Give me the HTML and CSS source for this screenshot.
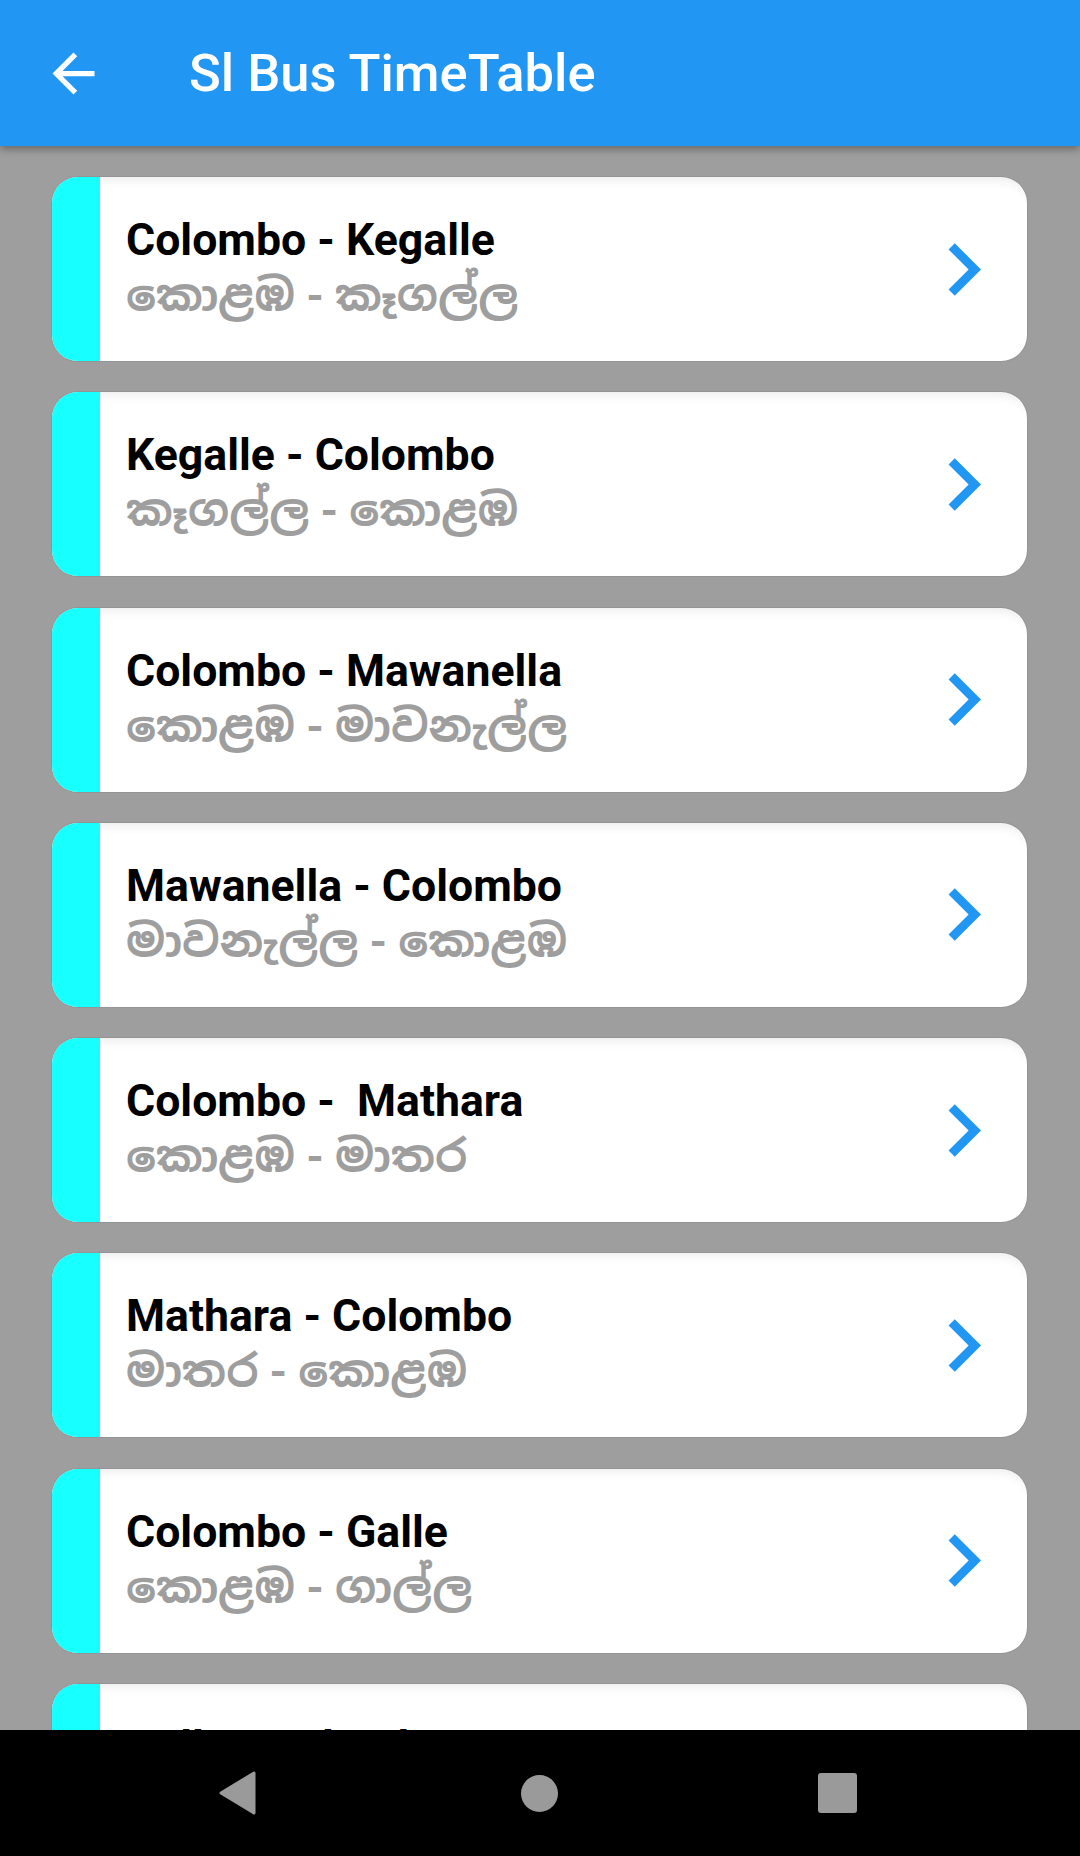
FILE: index.html
```html
<!DOCTYPE html>
<html>
<head>
<meta charset="utf-8">
<link rel="stylesheet" href="styles.css">
</head>
<body>
<div class="screen">
  <header class="appbar">
    <svg class="back" viewBox="0 0 24 24" width="63" height="63"><path fill="#fff" d="M20 11H7.83l5.59-5.59L12 4l-8 8 8 8 1.41-1.41L7.83 13H20v-2z"/></svg>
    <div class="title">Sl Bus TimeTable</div>
  </header>
  <main class="list">
    <div class="card"><div class="strip"></div><div class="texts"><div class="en">Colombo - Kegalle</div><div class="si">කොළඹ - කෑගල්ල</div></div><svg class="chev" viewBox="0 0 24 24"><path d="M10 6L8.59 7.41 13.17 12l-4.58 4.59L10 18l6-6z"/></svg></div>
    <div class="card"><div class="strip"></div><div class="texts"><div class="en">Kegalle - Colombo</div><div class="si">කෑගල්ල - කොළඹ</div></div><svg class="chev" viewBox="0 0 24 24"><path d="M10 6L8.59 7.41 13.17 12l-4.58 4.59L10 18l6-6z"/></svg></div>
    <div class="card"><div class="strip"></div><div class="texts"><div class="en">Colombo - Mawanella</div><div class="si">කොළඹ - මාවනැල්ල</div></div><svg class="chev" viewBox="0 0 24 24"><path d="M10 6L8.59 7.41 13.17 12l-4.58 4.59L10 18l6-6z"/></svg></div>
    <div class="card"><div class="strip"></div><div class="texts"><div class="en">Mawanella - Colombo</div><div class="si">මාවනැල්ල - කොළඹ</div></div><svg class="chev" viewBox="0 0 24 24"><path d="M10 6L8.59 7.41 13.17 12l-4.58 4.59L10 18l6-6z"/></svg></div>
    <div class="card"><div class="strip"></div><div class="texts"><div class="en">Colombo - &nbsp;Mathara</div><div class="si">කොළඹ - මාතර</div></div><svg class="chev" viewBox="0 0 24 24"><path d="M10 6L8.59 7.41 13.17 12l-4.58 4.59L10 18l6-6z"/></svg></div>
    <div class="card"><div class="strip"></div><div class="texts"><div class="en">Mathara - Colombo</div><div class="si">මාතර - කොළඹ</div></div><svg class="chev" viewBox="0 0 24 24"><path d="M10 6L8.59 7.41 13.17 12l-4.58 4.59L10 18l6-6z"/></svg></div>
    <div class="card"><div class="strip"></div><div class="texts"><div class="en">Colombo - Galle</div><div class="si">කොළඹ - ගාල්ල</div></div><svg class="chev" viewBox="0 0 24 24"><path d="M10 6L8.59 7.41 13.17 12l-4.58 4.59L10 18l6-6z"/></svg></div>
    <div class="card"><div class="strip"></div><div class="texts"><div class="en">Galle - Colombo</div><div class="si">ගාල්ල - කොළඹ</div></div><svg class="chev" viewBox="0 0 24 24"><path d="M10 6L8.59 7.41 13.17 12l-4.58 4.59L10 18l6-6z"/></svg></div>
  </main>
  <nav class="navbar">
    <svg class="nav-back" viewBox="0 0 38 44" width="38" height="44"><path d="M36 2 L36 42 L3 22 Z" fill="#9a9a9a" stroke="#9a9a9a" stroke-width="3" stroke-linejoin="round"/></svg>
    <div class="nav-home"></div>
    <div class="nav-recent"></div>
  </nav>
</div>
</body>
</html>
```
FILE: styles.css
```css
* { box-sizing: border-box; }
html, body { margin: 0; padding: 0; }
body { width: 1080px; height: 1856px; overflow: hidden; background: #9e9e9e; font-family: Roboto, "Noto Sans", "Noto Sans Sinhala", sans-serif; }
.screen { display: flex; flex-direction: column; height: 1856px; }
.appbar {
  height: 146px; flex: none; background: #2196f3; display: flex; align-items: center;
  padding-left: 42px; position: relative; z-index: 2;
  box-shadow: 0 3px 8px rgba(0,0,0,0.35);
}
.back { display: block; flex: none; }
.title { color: #fff; font-family: Roboto, sans-serif; font-weight: 500; font-size: 52.5px; margin-left: 84px; letter-spacing: 0; }
.list { flex: 1; overflow: hidden; padding: 31px 53px 0 52px; display: flex; flex-direction: column; gap: 31.3px; }
.card {
  flex: none; height: 184px; background: #fff; border-radius: 26px; display: flex; align-items: center; overflow: hidden;
  box-shadow: inset 0 12px 12px -10px rgba(0,0,0,0.09), 0 0 0 1px rgba(0,0,0,0.06);
}
.strip { width: 48px; align-self: stretch; background: #18ffff; flex: none; }
.texts { flex: 1; padding-left: 26px; align-self: flex-start; padding-top: 37px; }
.en { font-family: Roboto, sans-serif; font-weight: 700; font-size: 44.6px; color: #000; line-height: 52px; }
.si { font-weight: 700; font-size: 44.6px; color: #9e9e9e; line-height: 60px; }
.chev { width: 105px; height: 105px; fill: #2196f3; flex: none; margin-right: 11px; }
.navbar { height: 126px; flex: none; background: #000; display: flex; align-items: center; position: relative; z-index: 2; }
.nav-back { position: relative; margin-left: 218px; }
.nav-home { width: 37px; height: 37px; border-radius: 50%; background: #9a9a9a; margin-left: 265px; }
.nav-recent { width: 39px; height: 40px; border-radius: 3px; background: #9a9a9a; margin-left: 260px; }
```
